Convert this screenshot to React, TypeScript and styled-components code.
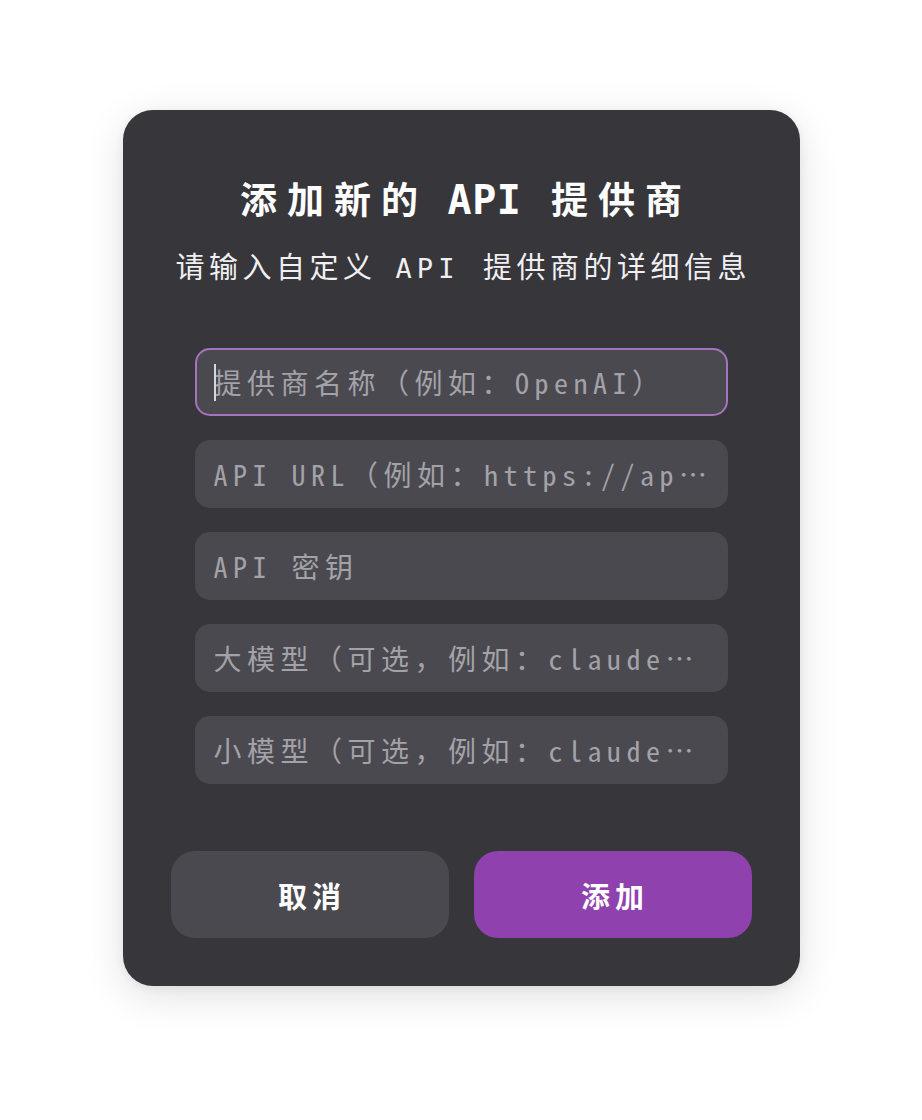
import React from "react";
import styled, { createGlobalStyle } from "styled-components";

const Global = createGlobalStyle`
  html, body { margin: 0; padding: 0; background: #ffffff; }
  body { width: 922px; height: 1120px; overflow: hidden; }
  * { box-sizing: border-box; }
`;

const FONT = `"DejaVu Sans Mono", "Noto Sans CJK SC", monospace`;
const INPUT_FONT = `"Noto Sans Mono CJK SC", "DejaVu Sans Mono", "Noto Sans CJK SC", monospace`;

const Page = styled.div`
  width: 922px;
  height: 1120px;
  display: flex;
  justify-content: center;
  padding-top: 110px;
  font-family: ${FONT};
`;

const Card = styled.div`
  width: 677px;
  height: 876px;
  background: #37363b;
  border-radius: 30px;
  box-shadow: 0 10px 40px rgba(0, 0, 0, 0.12), 0 2px 10px rgba(0, 0, 0, 0.06);
  padding: 68px 48px 48px;
  display: flex;
  flex-direction: column;
  align-items: stretch;
`;

/* CJK run: its own size and a spacing centred on each glyph */
const Han = styled.span<{ $size: number; $gap: number }>`
  font-family: "Noto Sans CJK SC", sans-serif;
  font-size: ${(p) => p.$size}px;
  letter-spacing: ${(p) => p.$gap}px;
  margin-left: ${(p) => p.$gap / 2}px;
  margin-right: ${(p) => -p.$gap / 2}px;
`;

const Title = styled.h1`
  margin: 0;
  font-family: ${FONT};
  font-size: 40px;
  line-height: 41px;
  font-weight: 700;
  color: #ffffff;
  text-align: center;
  letter-spacing: 0.5px;
  white-space: nowrap;
`;

const Subtitle = styled.p`
  margin: 27px 0 0;
  font-family: ${FONT};
  font-size: 27px;
  line-height: 35px;
  font-weight: 400;
  color: #f0eff2;
  text-align: center;
  letter-spacing: 5px;
  white-space: nowrap;
`;

const Fields = styled.div`
  margin: 62px 24px 0;
  display: flex;
  flex-direction: column;
  gap: 24px;
`;

const FieldWrap = styled.div`
  position: relative;
  height: 68px;
`;

const Input = styled.input<{ $focused?: boolean }>`
  width: 100%;
  height: 100%;
  border-radius: 15px;
  background: #4a494f;
  border: 2px solid ${(p) => (p.$focused ? "#a674bd" : "transparent")};
  outline: none;
  padding: 0 14px 0 17px;
  font-family: ${INPUT_FONT};
  font-size: 28px;
  letter-spacing: 5.5px;
  color: #ffffff;
  text-overflow: ellipsis;
  &::placeholder {
    color: #a3a2a8;
    opacity: 1;
  }
`;

const Caret = styled.span`
  position: absolute;
  left: 19px;
  top: 16px;
  width: 2px;
  height: 37px;
  background: #d8d6dc;
`;

const Actions = styled.div`
  margin-top: 67px;
  display: grid;
  grid-template-columns: 1fr 1fr;
  gap: 25px;
`;

const Button = styled.button<{ $primary?: boolean }>`
  height: 87px;
  border: none;
  border-radius: 24px;
  background: ${(p) => (p.$primary ? "#8f41ad" : "#4a494f")};
  color: #ffffff;
  font-family: "Noto Sans CJK SC", sans-serif;
  font-size: 29px;
  font-weight: 700;
  letter-spacing: 5px;
  padding: 0 0 0 5px;
  cursor: pointer;
`;

const fields = [
  "API URL（例如：https://api.anthropic.com）",
  "API 密钥",
  "大模型（可选，例如：claude-3-opus）",
  "小模型（可选，例如：claude-3-haiku）",
];

export default function App() {
  return (
    <>
      <Global />
      <Page>
        <Card>
          <Title>
            <Han $size={37} $gap={10}>添加新的</Han> API <Han $size={37} $gap={10}>提供商</Han>
          </Title>
          <Subtitle>
            <Han $size={29} $gap={4.5}>请输入自定义</Han> API <Han $size={29} $gap={4.5}>提供商的详细信息</Han>
          </Subtitle>
          <Fields>
            <FieldWrap>
              <Input $focused placeholder="提供商名称（例如：OpenAI）" />
              <Caret />
            </FieldWrap>
            {fields.map((f) => (
              <FieldWrap key={f}>
                <Input placeholder={f} />
              </FieldWrap>
            ))}
          </Fields>
          <Actions>
            <Button>取消</Button>
            <Button $primary>添加</Button>
          </Actions>
        </Card>
      </Page>
    </>
  );
}
